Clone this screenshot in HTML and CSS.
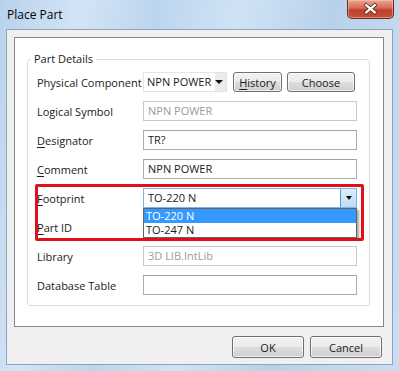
FILE: index.html
```html
<!DOCTYPE html>
<html lang="en">
<head>
    <meta charset="UTF-8">
    <title>Place Part</title>
    <link rel="stylesheet" href="styles.css">
</head>
<body>
    <div class="window">
        <div class="titlebar">
            <span class="title">Place Part</span>
            <button class="close-btn" aria-label="Close">
                <svg width="47" height="18" viewBox="0 0 47 18">
                    <path d="M19 5 L28 12.5 M28 5 L19 12.5" stroke="#5b2417" stroke-width="4" stroke-linecap="square"/>
                    <path d="M19 5 L28 12.5 M28 5 L19 12.5" stroke="#ffffff" stroke-width="2.4" stroke-linecap="square"/>
                </svg>
            </button>
        </div>

        <div class="client">
            <div class="panel">
                <fieldset class="group">
                    <legend>Part Details</legend>
                    <div class="form">
                        <div class="row">
                            <label>Physical Component</label>
                            <div class="controls">
                                <div class="combo small">NPN POWER<span class="caret"></span></div>
                                <button class="btn history"><u>H</u>istory</button>
                                <button class="btn choose">Choose</button>
                            </div>
                        </div>
                        <div class="row">
                            <label>Logical Symbol</label>
                            <div class="field disabled">NPN POWER</div>
                        </div>
                        <div class="row">
                            <label><u>D</u>esignator</label>
                            <div class="field">TR?</div>
                        </div>
                        <div class="row">
                            <label><u>C</u>omment</label>
                            <div class="field">NPN POWER</div>
                        </div>

                        <div class="highlight">
                            <div class="row">
                                <label><u>F</u>ootprint</label>
                                <div class="field combo open">TO-220 N<span class="drop-btn"><span class="caret"></span></span></div>
                            </div>
                            <div class="row">
                                <label><u>P</u>art ID</label>
                                <div class="field"></div>
                            </div>
                            <ul class="dropdown-list">
                                <li class="selected">TO-220 N</li>
                                <li>TO-247 N</li>
                            </ul>
                            <div class="annotation"></div>
                        </div>

                        <div class="row">
                            <label>Library</label>
                            <div class="field disabled">3D LIB.IntLib</div>
                        </div>
                        <div class="row">
                            <label>Database Table</label>
                            <div class="field"></div>
                        </div>
                    </div>
                </fieldset>
            </div>

            <div class="footer">
                <button class="btn dialog-btn">OK</button>
                <button class="btn dialog-btn">Cancel</button>
            </div>
        </div>
    </div>
</body>
</html>
```

FILE: styles.css
```css
/* Page */
body {
    margin: 0;
    font-family: 'Open Sans', 'Noto Sans', sans-serif;
    font-size: 11px;
    color: #1a1a1a;
}

/* Window frame with aero glass look */
.window {
    width: 399px;
    height: 371px;
    display: flex;
    flex-direction: column;
    background: linear-gradient(100deg, #b9d2eb 0%, #d3e4f5 18%, #bcd5ee 34%, #d0e3f5 52%, #b8d1ea 72%, #cadef2 100%);
}

.titlebar {
    height: 29px;
    display: flex;
    justify-content: space-between;
    align-items: flex-start;
    flex-shrink: 0;
}

.title {
    font-size: 12px;
    color: #000;
    margin: 6px 0 0 7px;
}

.close-btn {
    width: 47px;
    height: 19px;
    margin-right: 5px;
    padding: 0;
    border: 1px solid #6f2a1f;
    border-top: none;
    border-radius: 0 0 5px 5px;
    background: linear-gradient(#e9a795 0%, #d66a52 45%, #c0412a 55%, #c2513a 100%);
    box-shadow: inset 0 0 0 1px rgba(255, 210, 200, 0.45);
    display: flex;
}

/* Client area */
.client {
    flex: 1;
    margin: 0 6px 6px;
    border: 1px solid #8ea4bd;
    background: #f0f0f0;
    padding: 7px 8px 0 7px;
    display: flex;
    flex-direction: column;
}

.panel {
    height: 290px;
    box-sizing: border-box;
    background: #ffffff;
    border: 1px solid #828790;
    padding: 13px 13px 0 12px;
}

/* Group box */
.group {
    margin: 0;
    padding: 5px 12px 10px 9px;
    border: 1px solid #d5dfe5;
    border-radius: 3px;
}

.group legend {
    padding: 0 3px;
    margin-left: -6px;
    line-height: 16px;
    color: #1a1a1a;
}

.form {
    display: flex;
    flex-direction: column;
    gap: 9px;
}

.row {
    display: grid;
    grid-template-columns: 106px 1fr;
    align-items: center;
    height: 20px;
}

.row label u,
.btn u {
    text-decoration-thickness: 1px;
    text-underline-offset: 2px;
}

.controls {
    display: flex;
    gap: 5px;
    height: 20px;
}

/* Text boxes */
.field {
    height: 20px;
    box-sizing: border-box;
    border: 1px solid #abadb3;
    border-top-color: #9fa3ab;
    background: #ffffff;
    padding: 0 4px;
    line-height: 18px;
    white-space: nowrap;
}

.field.disabled {
    color: #9a9a9a;
    border-color: #c6c9cd;
}

/* Combo boxes */
.combo {
    position: relative;
}

.combo.small {
    width: 84px;
    height: 20px;
    box-sizing: border-box;
    border: 1px solid #e3e3e3;
    background: linear-gradient(90deg, #ffffff 86%, #ececec 86%);
    padding: 0 3px;
    line-height: 18px;
}

.caret {
    display: inline-block;
    width: 0;
    height: 0;
    border-left: 4px solid transparent;
    border-right: 4px solid transparent;
    border-top: 4px solid #111;
}

.combo.small .caret {
    position: absolute;
    right: 3px;
    top: 7px;
}

.combo.open {
    border-color: #7eb4ea;
}

.drop-btn {
    position: absolute;
    right: 0;
    top: 0;
    bottom: 0;
    width: 15px;
    border-left: 1px solid #5a94c8;
    background: linear-gradient(#dcecfc, #c1dcf4);
    display: flex;
    align-items: center;
    justify-content: center;
}

.drop-btn .caret {
    border-left-width: 3.5px;
    border-right-width: 3.5px;
    border-top-width: 4px;
}

/* Buttons */
.btn {
    font-family: inherit;
    font-size: 11px;
    color: #1a1a1a;
    height: 20px;
    padding: 0;
    border: 1px solid #707070;
    border-radius: 3px;
    background: linear-gradient(#f2f2f2 0%, #ebebeb 48%, #dddddd 52%, #cfcfcf 100%);
    box-shadow: inset 0 0 0 1px rgba(255, 255, 255, 0.7);
}

.btn.history {
    width: 49px;
    margin-left: 1px;
}

.btn.choose {
    width: 68px;
}

/* Highlighted footprint area */
.highlight {
    position: relative;
    display: flex;
    flex-direction: column;
    gap: 9px;
}

.dropdown-list {
    position: absolute;
    left: 106px;
    right: 0;
    top: 20px;
    margin: 0;
    padding: 0;
    list-style: none;
    background: #ffffff;
    border: 1px solid #646464;
    box-shadow: 2px 2px 2px rgba(0, 0, 0, 0.35);
}

.dropdown-list li {
    height: 14px;
    line-height: 14px;
    padding: 0 2px;
}

.dropdown-list li.selected {
    background: #3399ff;
    color: #ffffff;
}

.annotation {
    position: absolute;
    top: -4px;
    left: -2px;
    right: -7px;
    bottom: -4px;
    border: 3px solid #e10f1b;
    border-radius: 2px;
    pointer-events: none;
}

/* Dialog footer */
.footer {
    display: flex;
    justify-content: flex-end;
    gap: 6px;
    margin-top: 9px;
    padding-right: 2px;
}

.dialog-btn {
    width: 72px;
    height: 22px;
}
```
